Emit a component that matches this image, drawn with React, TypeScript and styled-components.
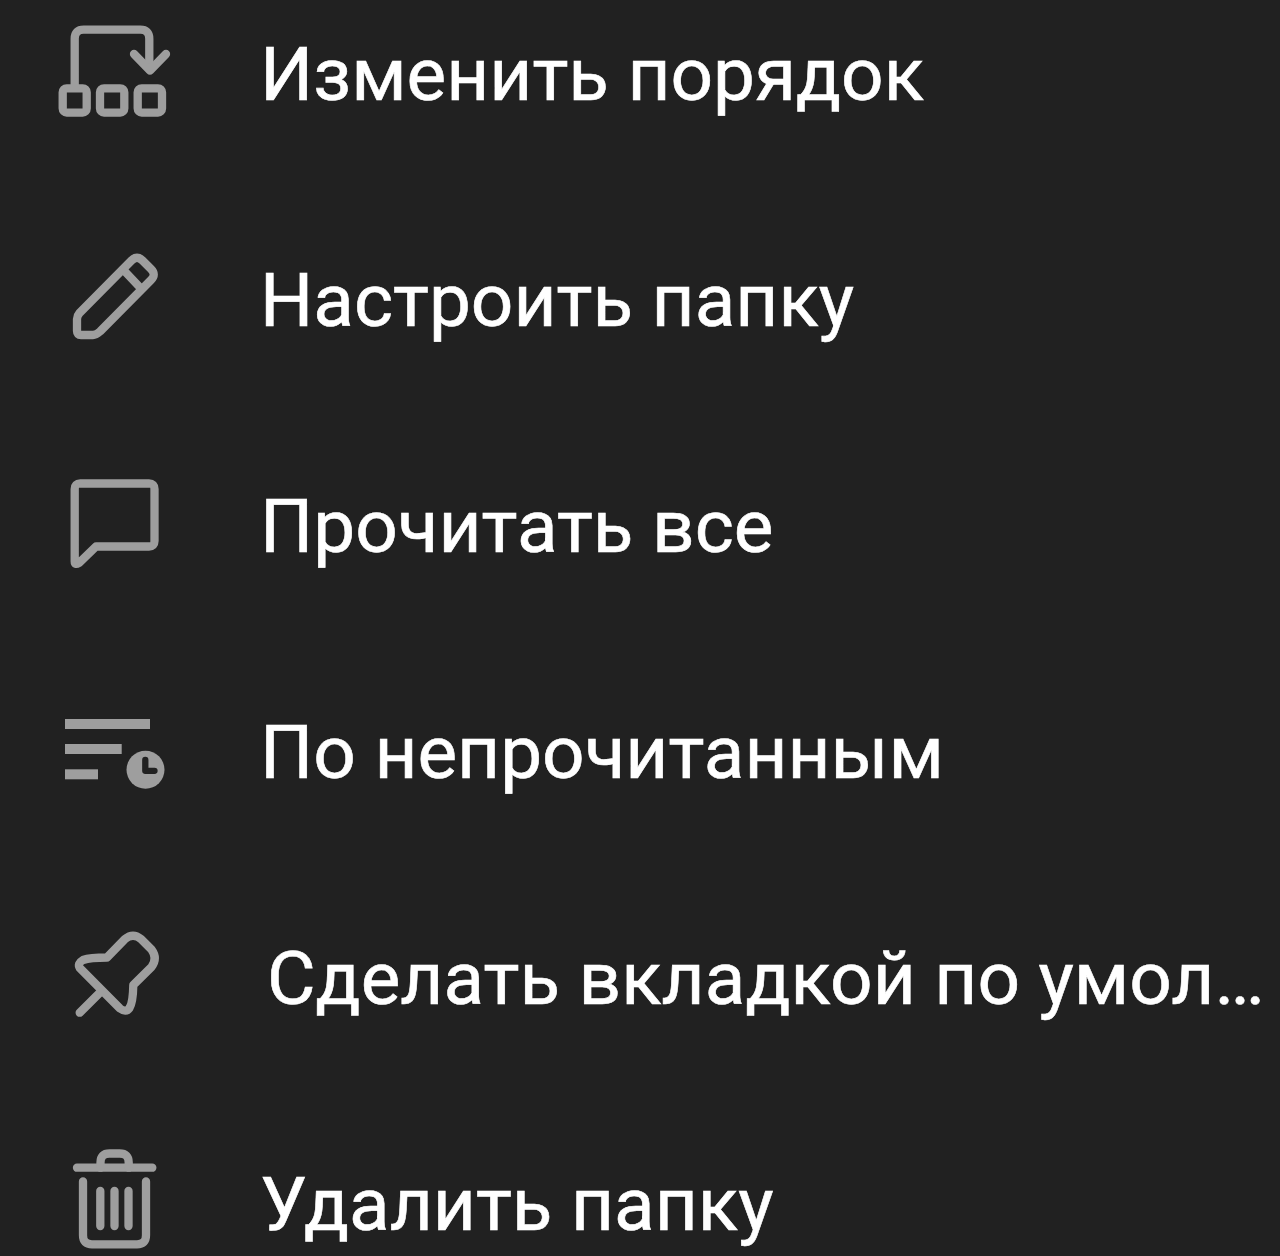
import React from 'react';
import { createGlobalStyle, styled } from 'styled-components';

const ROW_HEIGHT = 226;

const GlobalStyle = createGlobalStyle`
  body {
    margin: 0;
    background: #212121;
    overflow: hidden;
  }
`

const Menu = styled.ul`
  display: flex;
  flex-direction: column;
  justify-content: flex-start;
  box-sizing: border-box;
  width: 1280px;
  height: 1256px;
  margin: 0;
  padding: 0;
  overflow: hidden;
  list-style: none;
  background: #212121;
`

// the list is scrolled a little, so the first row is cut at the top
const MenuItem = styled.li`
  display: flex;
  flex: none;
  align-items: center;
  height: ${ROW_HEIGHT}px;
  padding-left: 40px;

  &:first-child {
    margin-top: -39px;
  }
`

const Icon = styled.svg`
  flex: none;
  width: 150px;
  height: 120px;
  fill: none;
  stroke: #9e9e9e;
  stroke-width: 8.3;
  stroke-linecap: round;
  stroke-linejoin: round;
`

const Label = styled.span<{ $indent?: number }>`
  margin-left: ${({ $indent = 0 }) => 70 + $indent}px;
  padding-top: 2px;
  color: #fff;
  font-family: Roboto, 'Noto Sans', sans-serif;
  font-size: 74.7px;
  font-weight: 400;
  line-height: 90px;
  white-space: nowrap;
  -webkit-text-stroke: 0.6px #fff;
`

const ReorderIcon = () => (
  <Icon viewBox="0 0 150 120">
    <path d="M34.7 71V24.7q0-9 9-9h56.6q9 0 9 9V55" />
    <path d="M94 40l16 16.5l16-16.5" />
    <rect x="22.7" y="74.3" width="24" height="24.3" rx="4" />
    <rect x="60" y="74.3" width="24.3" height="24.3" rx="4" />
    <rect x="97.7" y="74.3" width="24.3" height="24.3" rx="4" />
  </Icon>
)

const EditIcon = () => (
  <Icon viewBox="0 0 150 120">
    <path d="M37 91V79Q37 76 39.5 73L91.5 20.5Q97 15 102.5 20.5L111 29Q116.5 34.5 111 40L60 91.5Q56 95 53 95H41Q37 95 37 91Z" />
    <path d="M83 29.5L101 48.5" />
  </Icon>
)

const ChatIcon = () => (
  <Icon viewBox="0 0 150 120">
    <path d="M34.7 95.5V23q0-5.5 5.5-5.5H109q5.5 0 5.5 5.5V75q0 5.5-5.5 5.5H56L39 97q-4.3 2.5-4.3-1.5z" />
  </Icon>
)

const UnreadIcon = () => (
  <Icon viewBox="0 0 150 120">
    <g fill="#9e9e9e" stroke="none">
      <rect x="25" y="27" width="85" height="10" />
      <rect x="25" y="52" width="56.7" height="10" />
      <rect x="25" y="77.3" width="33" height="10" />
      <circle cx="105.5" cy="77.7" r="19" />
    </g>
    <path d="M105.3 68V78.8H114.5" stroke="#212121" strokeWidth="6.3" />
  </Icon>
)

const PinIcon = () => (
  <Icon viewBox="0 0 150 120">
    <path d="M39.8 50L80 90.5Q86 95 89.5 90Q93 84.5 93.3 67L111.5 49Q118 40.5 111.5 31.5L101 21Q93 14.5 85 21L67 39.5Q50 39.5 43 42Q37 45.5 39.8 50Z" />
    <path d="M39.7 94.7L60 74.5" />
  </Icon>
)

const TrashIcon = () => (
  <Icon viewBox="0 0 150 120">
    <path d="M37 23.7H112.3" />
    <path d="M60.5 23.7V18.5q0-9 9-9H79.7q9 0 9 9V23.7" />
    <path d="M43 37.5V91.3q0 9 9 9H97q9 0 9-9V37.5" />
    <path d="M60.3 47V82M74.5 47V82M88.5 47V82" />
  </Icon>
)

const items = [
  { label: 'Изменить порядок', icon: <ReorderIcon /> },
  { label: 'Настроить папку', icon: <EditIcon /> },
  { label: 'Прочитать все', icon: <ChatIcon /> },
  { label: 'По непрочитанным', icon: <UnreadIcon /> },
  { label: 'Сделать вкладкой по умол…', icon: <PinIcon />, indent: 7 },
  { label: 'Удалить папку', icon: <TrashIcon /> },
]

const App = () => {
  return (
    <>
      <GlobalStyle />
      <Menu>
        {items.map(({ label, icon, indent }) => (
          <MenuItem key={label}>
            {icon}
            <Label $indent={indent}>{label}</Label>
          </MenuItem>
        ))}
      </Menu>
    </>
  );
}

export default App;
